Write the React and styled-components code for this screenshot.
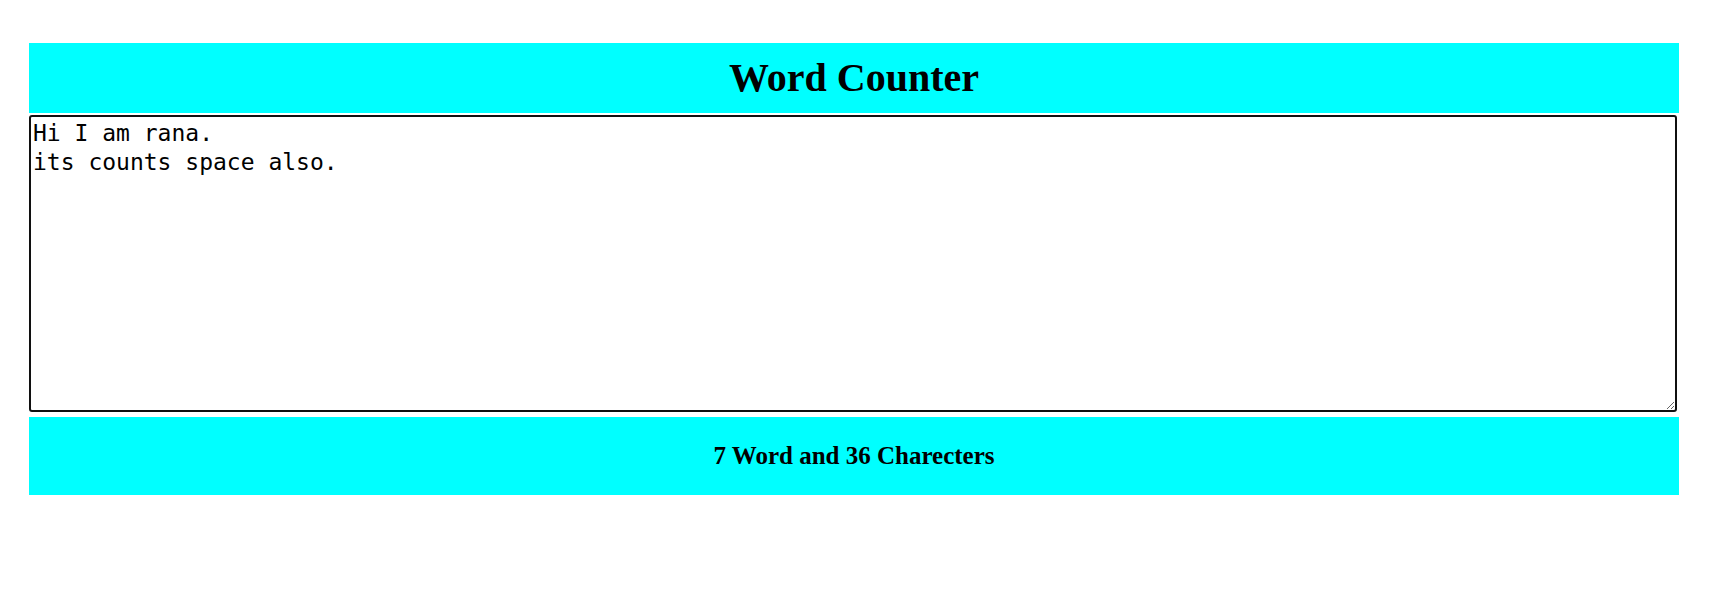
import React, { useState, useRef, useEffect } from "react";
import styled, { createGlobalStyle } from "styled-components";

const GlobalStyle = createGlobalStyle`
  html, body {
    margin: 0;
    padding: 0;
    background: #ffffff;
  }
`;

const Page = styled.div`
  padding: 43px 0 0 29px;
`;

const Container = styled.div`
  width: 1650px;
  display: flex;
  flex-direction: column;
`;

const Title = styled.h1`
  margin: 0;
  background-color: #00ffff;
  color: #000;
  font-family: "Liberation Serif", "Times New Roman", serif;
  font-size: 40px;
  font-weight: bold;
  line-height: 70px;
  text-align: center;
`;

const TextBox = styled.textarea`
  display: block;
  box-sizing: border-box;
  width: 1648px;
  height: 297px;
  margin: 2px 0 5px;
  padding: 2px;
  border: 2px solid #101010;
  border-radius: 3px;
  outline: none;
  resize: both;
  font-family: "DejaVu Sans Mono", "Liberation Mono", monospace;
  font-size: 23px;
  line-height: 29px;
  color: #000;
  caret-color: #000;
  &:focus {
    outline: none;
  }
`;

const Result = styled.h2`
  margin: 0;
  background-color: #00ffff;
  color: #000;
  font-family: "Liberation Serif", "Times New Roman", serif;
  font-size: 25px;
  font-weight: bold;
  line-height: 78px;
  text-align: center;
`;

export default function App() {
  const [text, setText] = useState("Hi I am rana.\nits counts space also.");
  const boxRef = useRef(null);

  useEffect(() => {
    // put the caret right after "its"
    const el = boxRef.current;
    if (el) {
      el.focus();
      el.setSelectionRange(17, 17);
    }
  }, []);

  const words = text.split(" ").length;

  return (
    <Page>
      <GlobalStyle />
      <Container>
        <Title>Word Counter</Title>
        <TextBox
          ref={boxRef}
          value={text}
          onChange={e => setText(e.target.value)}
          spellCheck={false}
        />
        <Result>
          {words} Word and {text.length} Charecters
        </Result>
      </Container>
    </Page>
  );
}
